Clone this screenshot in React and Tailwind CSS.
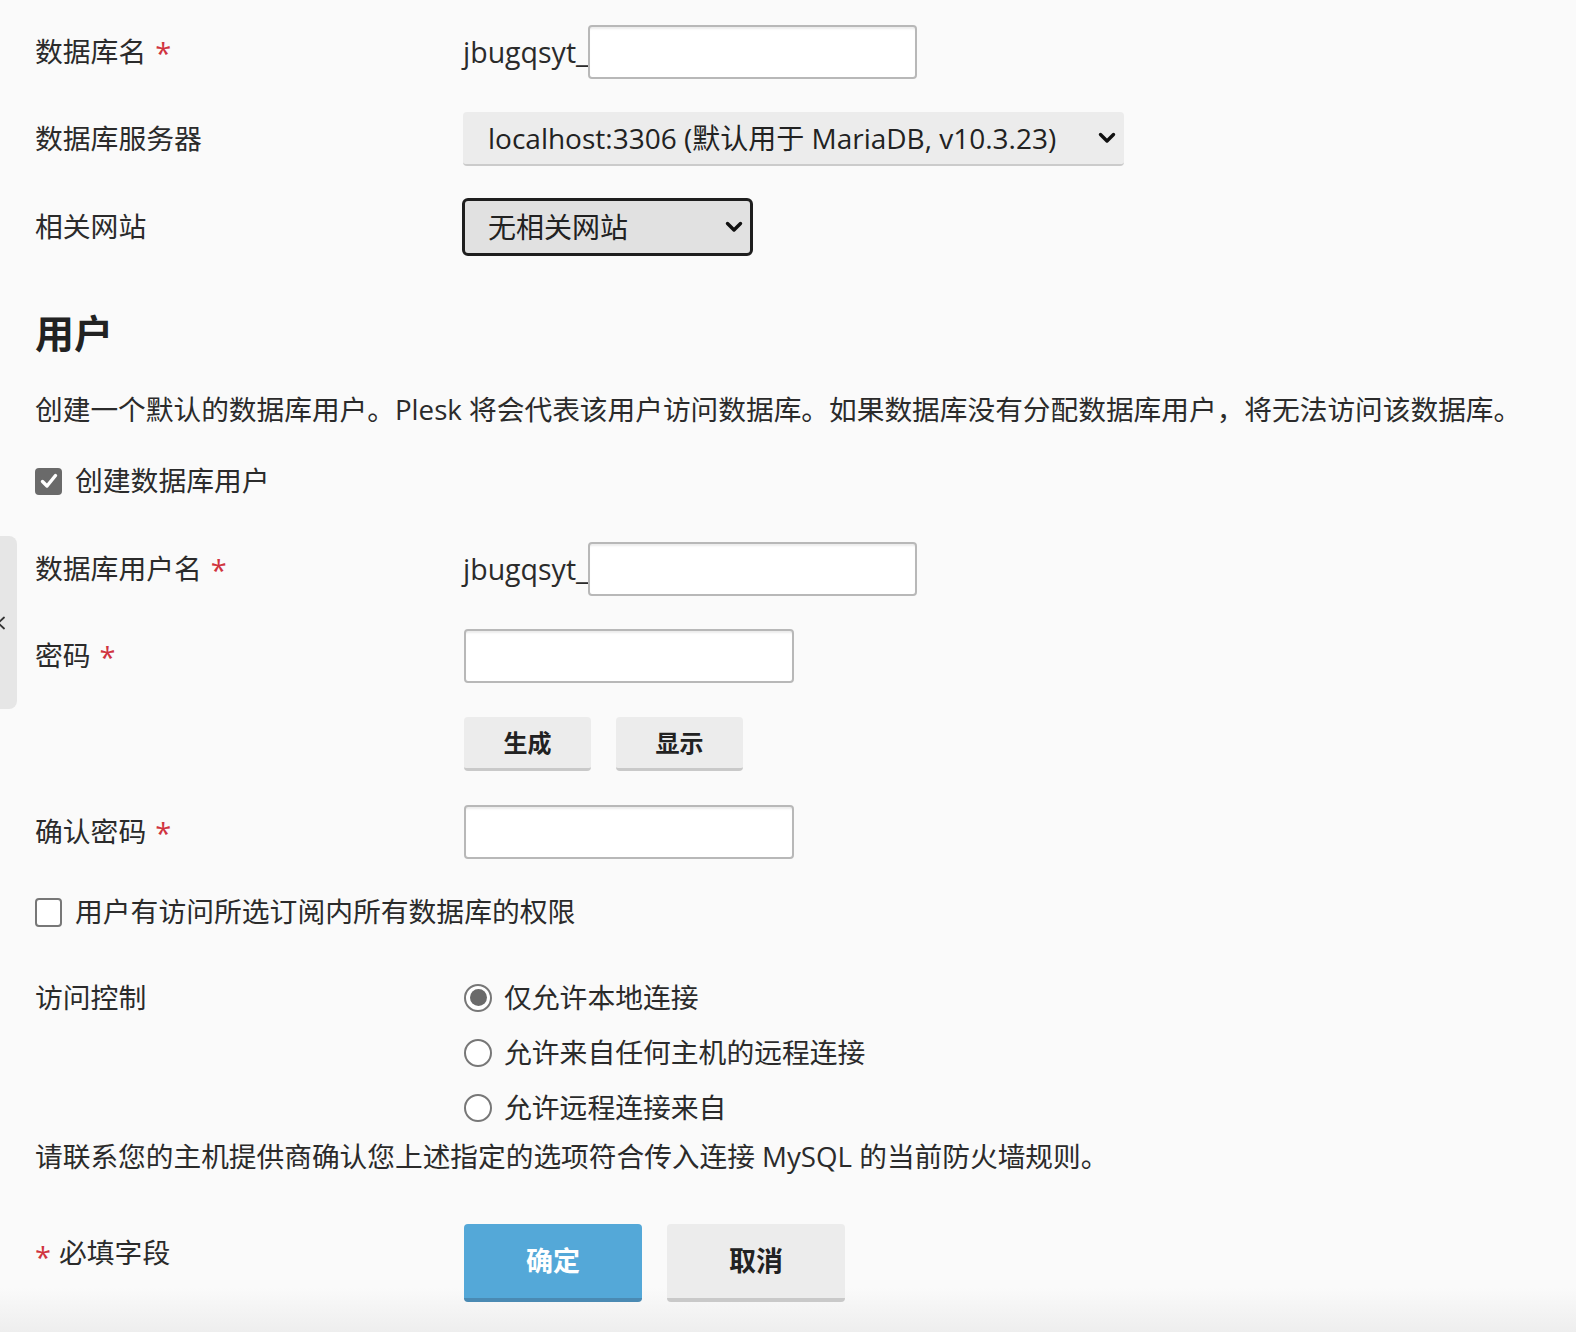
import React from "react";

const FONT = { fontFamily: '"Open Sans", "Noto Sans CJK SC", sans-serif' };

function Star() {
  return <span className="ml-[9px] text-[#d0343f] relative top-[0px] text-[29px]">*</span>;
}

function Label({ children, req }) {
  return (
    <div className="w-[428px] shrink-0 flex items-center text-[27.8px] text-[#2b2b2b] leading-none">
      <span>{children}</span>
      {req && <Star />}
    </div>
  );
}

function TextInput({ w = "w-[329px]" }) {
  return (
    <div
      className={`${w} h-[54px] bg-white border-2 border-[#b8b8b8] rounded-[4px] shadow-[inset_0_3px_2px_-1px_#ececec]`}
    />
  );
}

function Chevron({ className = "" }) {
  return (
    <svg className={className} width="18" height="12" viewBox="0 0 18 12" fill="none">
      <path d="M2.5 2.5 L9 9 L15.5 2.5" stroke="#111" strokeWidth="3.4" strokeLinecap="round" strokeLinejoin="round" />
    </svg>
  );
}

function Radio({ checked }) {
  return (
    <div className="w-[28px] h-[28px] rounded-full border-2 border-[#777] bg-white flex items-center justify-center shrink-0">
      {checked && <div className="w-[17px] h-[17px] rounded-full bg-[#6a6a6a]" />}
    </div>
  );
}

function GreyButton({ children, className = "" }) {
  return (
    <div
      className={`bg-[#ececec] rounded-[4px] border-b-[3px] border-[#c9c9c9] flex items-center justify-center font-bold text-[#222] ${className}`}
    >
      {children}
    </div>
  );
}

export default function App() {
  return (
    <div style={FONT} className="relative w-[1576px] h-[1332px] bg-[#fafafa] overflow-hidden text-[#2b2b2b]">
      {/* left collapse tab */}
      <div className="absolute left-0 top-[536px] w-[17px] h-[173px] bg-[#e6e6e6] rounded-r-[8px] overflow-hidden">
        <svg className="absolute left-[-5px] top-[80px]" width="12" height="14" viewBox="0 0 12 14" fill="none">
          <path d="M9 1.5 L3 7 L9 12.5" stroke="#333" strokeWidth="1.8" strokeLinecap="round" />
        </svg>
      </div>

      {/* bottom fade shadow */}
      <div className="absolute left-0 right-0 bottom-0 h-[44px] bg-gradient-to-b from-[#fafafa00] to-[#eeeeee]" />

      <div className="relative pl-[35px] pt-[25px]">
        {/* DB name */}
        <div className="flex h-[54px]">
          <Label req>数据库名</Label>
          <div className="flex items-center">
            <span className="text-[28.5px] text-[#2b2b2b] w-[125px] whitespace-nowrap">jbugqsyt_</span>
            <TextInput />
          </div>
        </div>

        {/* DB server */}
        <div className="flex h-[54px] mt-[33px]">
          <Label>数据库服务器</Label>
          <div className="w-[661px] h-[54px] bg-[#ececec] rounded-[4px] border-b-[2px] border-[#cbcbcb] flex items-center pl-[25px] pr-[8px] justify-between">
            <span className="text-[28px] text-[#222] whitespace-nowrap">localhost:3306 (默认用于 MariaDB, v10.3.23)</span>
            <Chevron />
          </div>
        </div>

        {/* Related site */}
        <div className="flex h-[58px] mt-[32px]">
          <Label>相关网站</Label>
          <div className="ml-[-1px] w-[291px] h-[58px] bg-[#e1e1e1] rounded-[6px] border-[3px] border-[#1e1e1e] flex items-center pl-[23px] pr-[7px] justify-between">
            <span className="text-[28px] text-[#222]">无相关网站</span>
            <Chevron />
          </div>
        </div>

        {/* Heading */}
        <div className="mt-[53px] h-[48px] flex items-center text-[39px] font-bold text-[#222]">用户</div>

        {/* description */}
        <div className="mt-[33px] h-[40px] flex items-center text-[27.7px] whitespace-nowrap">
          创建一个默认的数据库用户。Plesk 将会代表该用户访问数据库。如果数据库没有分配数据库用户，将无法访问该数据库。
        </div>

        {/* create user checkbox */}
        <div className="mt-[31px] h-[40px] flex items-center">
          <div className="w-[27px] h-[27px] bg-[#6a6a6a] rounded-[4px] flex items-center justify-center">
            <svg width="18" height="16" viewBox="0 0 18 16" fill="none">
              <path d="M2.5 8.5 L7 13 L15.5 2.5" stroke="#fff" strokeWidth="3.4" strokeLinecap="round" strokeLinejoin="round" />
            </svg>
          </div>
          <span className="ml-[13px] text-[27.8px]">创建数据库用户</span>
        </div>

        {/* DB user name */}
        <div className="flex h-[54px] mt-[41px]">
          <Label req>数据库用户名</Label>
          <div className="flex items-center">
            <span className="text-[28.5px] text-[#2b2b2b] w-[125px] whitespace-nowrap">jbugqsyt_</span>
            <TextInput />
          </div>
        </div>

        {/* password */}
        <div className="flex h-[54px] mt-[33px]">
          <Label req>密码</Label>
          <div className="ml-[1px]">
            <TextInput w="w-[330px]" />
          </div>
        </div>

        {/* generate / show */}
        <div className="flex h-[54px] mt-[34px]">
          <div className="w-[428px] shrink-0" />
          <div className="ml-[1px] flex gap-[25px]">
            <GreyButton className="w-[127px] h-[54px] text-[24px]">生成</GreyButton>
            <GreyButton className="w-[127px] h-[54px] text-[24px]">显示</GreyButton>
          </div>
        </div>

        {/* confirm password */}
        <div className="flex h-[54px] mt-[34px]">
          <Label req>确认密码</Label>
          <div className="ml-[1px]">
            <TextInput w="w-[330px]" />
          </div>
        </div>

        {/* all databases checkbox */}
        <div className="mt-[33px] h-[40px] flex items-center">
          <div className="w-[27px] h-[29px] bg-white border-2 border-[#777] rounded-[4px]" />
          <span className="ml-[13px] text-[27.8px]">用户有访问所选订阅内所有数据库的权限</span>
        </div>

        {/* access control */}
        <div className="flex mt-[38px]">
          <div className="w-[428px] shrink-0 h-[55px] flex items-center text-[27.8px] leading-none">访问控制</div>
          <div className="ml-[1px] flex flex-col">
            <div className="h-[55px] flex items-center">
              <Radio checked />
              <span className="ml-[12px] text-[27.8px]">仅允许本地连接</span>
            </div>
            <div className="h-[55px] flex items-center">
              <Radio />
              <span className="ml-[12px] text-[27.8px]">允许来自任何主机的远程连接</span>
            </div>
            <div className="h-[55px] flex items-center">
              <Radio />
              <span className="ml-[12px] text-[27.8px]">允许远程连接来自</span>
            </div>
          </div>
        </div>

        {/* note */}
        <div className="mt-[2px] h-[40px] flex items-center text-[27.7px] whitespace-nowrap">
          请联系您的主机提供商确认您上述指定的选项符合传入连接 MySQL 的当前防火墙规则。
        </div>

        {/* footer buttons */}
        <div className="flex mt-[47px] h-[78px]">
          <div className="w-[428px] shrink-0 flex items-start pt-[8px] text-[27.8px]">
            <span className="text-[#d0343f] relative top-[3px] mr-[8px] text-[29px]">*</span>
            <span>必填字段</span>
          </div>
          <div className="ml-[1px] flex gap-[25px]">
            <div className="w-[178px] h-[78px] bg-[#54a8d8] rounded-[4px] border-b-[4px] border-[#4a8ab3] flex items-center justify-center text-white font-bold text-[27px]">
              确定
            </div>
            <GreyButton className="w-[178px] h-[78px] text-[27px] border-b-[4px]">取消</GreyButton>
          </div>
        </div>
      </div>
    </div>
  );
}
